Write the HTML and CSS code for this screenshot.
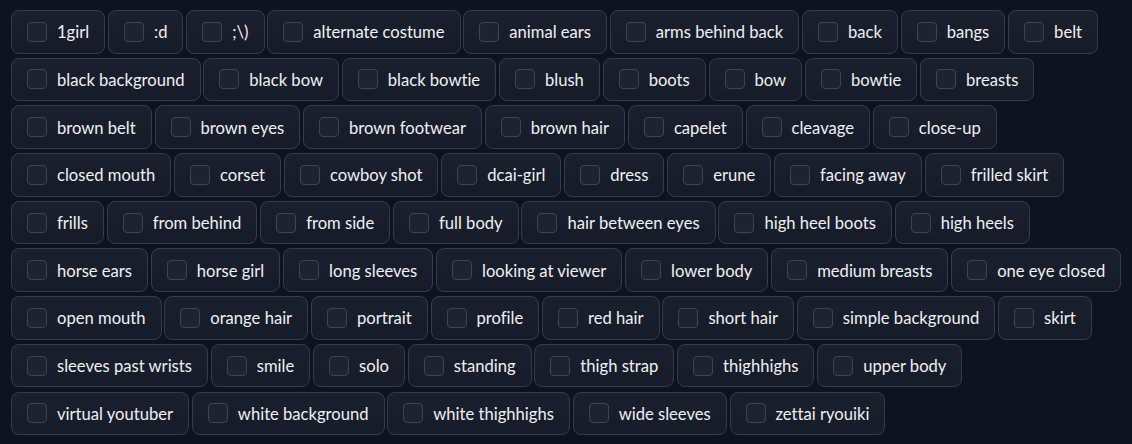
FILE: index.html
```html
<!DOCTYPE html>
<html>
<head>
<meta charset="utf-8">
<link rel="stylesheet" href="styles.css">
</head>
<body>
<div class="group">
<label class="tag"><span class="box"></span><span>1girl</span></label>
<label class="tag"><span class="box"></span><span>:d</span></label>
<label class="tag"><span class="box"></span><span>;\)</span></label>
<label class="tag"><span class="box"></span><span>alternate costume</span></label>
<label class="tag"><span class="box"></span><span>animal ears</span></label>
<label class="tag"><span class="box"></span><span>arms behind back</span></label>
<label class="tag"><span class="box"></span><span>back</span></label>
<label class="tag"><span class="box"></span><span>bangs</span></label>
<label class="tag"><span class="box"></span><span>belt</span></label>
<label class="tag"><span class="box"></span><span>black background</span></label>
<label class="tag"><span class="box"></span><span>black bow</span></label>
<label class="tag"><span class="box"></span><span>black bowtie</span></label>
<label class="tag"><span class="box"></span><span>blush</span></label>
<label class="tag"><span class="box"></span><span>boots</span></label>
<label class="tag"><span class="box"></span><span>bow</span></label>
<label class="tag"><span class="box"></span><span>bowtie</span></label>
<label class="tag"><span class="box"></span><span>breasts</span></label>
<label class="tag"><span class="box"></span><span>brown belt</span></label>
<label class="tag"><span class="box"></span><span>brown eyes</span></label>
<label class="tag"><span class="box"></span><span>brown footwear</span></label>
<label class="tag"><span class="box"></span><span>brown hair</span></label>
<label class="tag"><span class="box"></span><span>capelet</span></label>
<label class="tag"><span class="box"></span><span>cleavage</span></label>
<label class="tag"><span class="box"></span><span>close-up</span></label>
<label class="tag"><span class="box"></span><span>closed mouth</span></label>
<label class="tag"><span class="box"></span><span>corset</span></label>
<label class="tag"><span class="box"></span><span>cowboy shot</span></label>
<label class="tag"><span class="box"></span><span>dcai-girl</span></label>
<label class="tag"><span class="box"></span><span>dress</span></label>
<label class="tag"><span class="box"></span><span>erune</span></label>
<label class="tag"><span class="box"></span><span>facing away</span></label>
<label class="tag"><span class="box"></span><span>frilled skirt</span></label>
<label class="tag"><span class="box"></span><span>frills</span></label>
<label class="tag"><span class="box"></span><span>from behind</span></label>
<label class="tag"><span class="box"></span><span>from side</span></label>
<label class="tag"><span class="box"></span><span>full body</span></label>
<label class="tag"><span class="box"></span><span>hair between eyes</span></label>
<label class="tag"><span class="box"></span><span>high heel boots</span></label>
<label class="tag"><span class="box"></span><span>high heels</span></label>
<label class="tag"><span class="box"></span><span>horse ears</span></label>
<label class="tag"><span class="box"></span><span>horse girl</span></label>
<label class="tag"><span class="box"></span><span>long sleeves</span></label>
<label class="tag"><span class="box"></span><span>looking at viewer</span></label>
<label class="tag"><span class="box"></span><span>lower body</span></label>
<label class="tag"><span class="box"></span><span>medium breasts</span></label>
<label class="tag"><span class="box"></span><span>one eye closed</span></label>
<label class="tag"><span class="box"></span><span>open mouth</span></label>
<label class="tag"><span class="box"></span><span>orange hair</span></label>
<label class="tag"><span class="box"></span><span>portrait</span></label>
<label class="tag"><span class="box"></span><span>profile</span></label>
<label class="tag"><span class="box"></span><span>red hair</span></label>
<label class="tag"><span class="box"></span><span>short hair</span></label>
<label class="tag"><span class="box"></span><span>simple background</span></label>
<label class="tag"><span class="box"></span><span>skirt</span></label>
<label class="tag"><span class="box"></span><span>sleeves past wrists</span></label>
<label class="tag"><span class="box"></span><span>smile</span></label>
<label class="tag"><span class="box"></span><span>solo</span></label>
<label class="tag"><span class="box"></span><span>standing</span></label>
<label class="tag"><span class="box"></span><span>thigh strap</span></label>
<label class="tag"><span class="box"></span><span>thighhighs</span></label>
<label class="tag"><span class="box"></span><span>upper body</span></label>
<label class="tag"><span class="box"></span><span>virtual youtuber</span></label>
<label class="tag"><span class="box"></span><span>white background</span></label>
<label class="tag"><span class="box"></span><span>white thighhighs</span></label>
<label class="tag"><span class="box"></span><span>wide sleeves</span></label>
<label class="tag"><span class="box"></span><span>zettai ryouiki</span></label>
</div>
</body>
</html>
```
FILE: styles.css
```css
html, body {
  margin: 0;
  padding: 0;
  background: #0f1320;
}
body {
  font-family: Lato, "Liberation Sans", sans-serif;
  color: #eef0f4;
}
.group {
  display: flex;
  flex-wrap: wrap;
  gap: 4.1px 2.8px;
  padding: 10px 11px;
  width: 1116px;
}
.tag {
  display: flex;
  align-items: center;
  gap: 10px;
  height: 43.6px;
  box-sizing: border-box;
  padding: 1px 15px 0;
  border: 1.2px solid #353b49;
  border-radius: 8px;
  background: linear-gradient(to bottom, #1b202e, #171b28);
  font-size: 16.6px;
  font-variant-ligatures: none;
  white-space: nowrap;
}
.box {
  width: 20px;
  height: 20px;
  margin-top: -1px;
  box-sizing: border-box;
  border: 1.2px solid #3c4352;
  border-radius: 4px;
  background: #1e2331;
  flex: none;
}
```
